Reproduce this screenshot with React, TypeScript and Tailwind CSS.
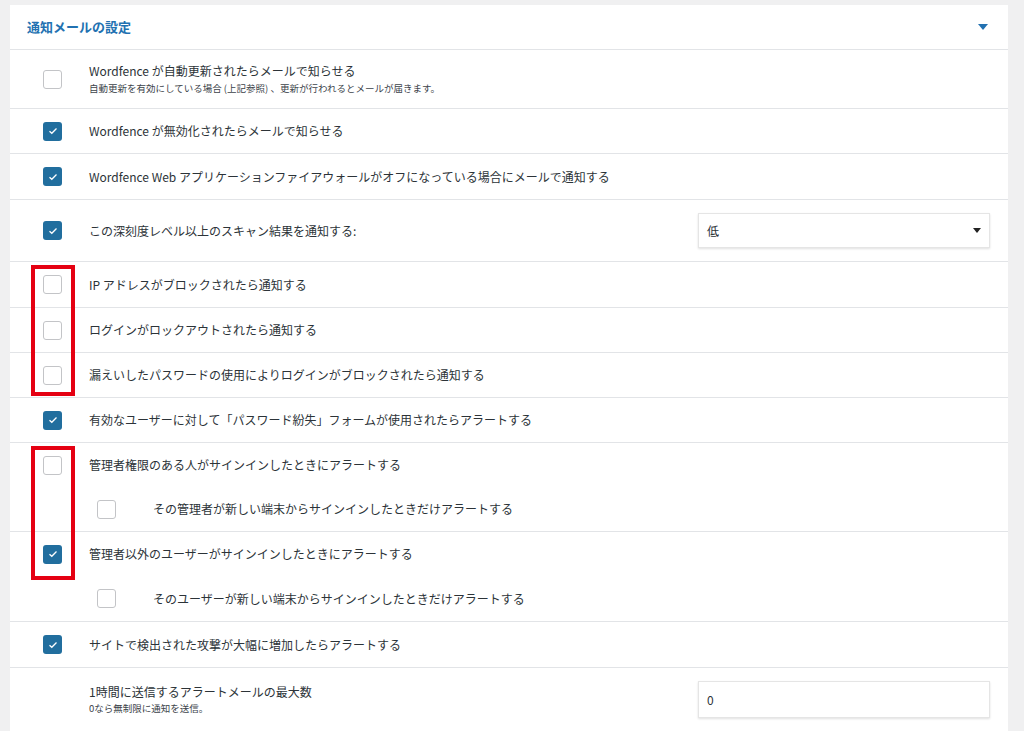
const Box = ({ on }: { on?: boolean }) =>
  on ? (
    <div className="w-[19px] h-[19px] rounded-[3px] bg-[#216e9e] flex items-center justify-center shrink-0">
      <svg width="10" height="8" viewBox="0 0 10 8"><path d="M1.5 4.2 L3.8 6.3 L8.5 1.5" stroke="white" strokeWidth="1.3" fill="none" /></svg>
    </div>
  ) : (
    <div className="w-[19px] h-[19px] rounded-[3px] border border-[#c3c4c7] bg-white shrink-0" />
  );

const Row = ({ on, text, sub, h = 45, border = true, indent = false }: { on?: boolean; text: string; sub?: string; h?: number; border?: boolean; indent?: boolean }) => (
  <div className={`flex items-center ${border ? "border-t border-[#e2e4e7]" : ""}`} style={{ height: h }}>
    <div className={indent ? "pl-[87px] w-[143px]" : "pl-[33px] w-[79px]"}><Box on={on} /></div>
    <div>
      <div className="text-[12px] text-[#2c3338]">{text}</div>
      {sub && <div className="text-[9.5px] text-[#3c434a] mt-[1px]">{sub}</div>}
    </div>
  </div>
);

export default function App() {
  return (
    <div className="w-[1024px] h-[731px] bg-[#f0f0f1] pt-[5px] pl-[10px] overflow-hidden" style={{ fontFamily: '"Noto Sans CJK JP", "Noto Sans", sans-serif' }}>
      <div className="w-[998px] bg-white relative">
        <div className="h-[44px] flex items-center justify-between pl-[17px] pr-[20px]">
          <span className="text-[13px] font-bold text-[#2271b1]">通知メールの設定</span>
          <svg width="10" height="6" viewBox="0 0 10 6"><path d="M0 0 H10 L5 6Z" fill="#2271b1" /></svg>
        </div>
        <Row text="Wordfence が自動更新されたらメールで知らせる" sub="自動更新を有効にしている場合 (上記参照) 、更新が行われるとメールが届きます。" h={59} />
        <Row on text="Wordfence が無効化されたらメールで知らせる" />
        <Row on text="Wordfence Web アプリケーションファイアウォールがオフになっている場合にメールで通知する" h={46} />
        <div className="flex items-center justify-between border-t border-[#e2e4e7] h-[62px] pr-[18px]">
          <div className="flex items-center">
            <div className="pl-[33px] w-[79px]"><Box on /></div>
            <span className="text-[12px] text-[#2c3338]">この深刻度レベル以上のスキャン結果を通知する:</span>
          </div>
          <div className="w-[292px] h-[35px] border border-[#e5e5e5] shadow-[0_1px_2px_rgba(0,0,0,0.12)] flex items-center justify-between px-[8px]">
            <span className="text-[12px] text-[#2c3338]">低</span>
            <svg width="8" height="5" viewBox="0 0 8 5"><path d="M0 0 H8 L4 5Z" fill="#222" /></svg>
          </div>
        </div>
        <Row text="IP アドレスがブロックされたら通知する" h={46} />
        <Row text="ログインがロックアウトされたら通知する" />
        <Row text="漏えいしたパスワードの使用によりログインがブロックされたら通知する" />
        <Row on text="有効なユーザーに対して「パスワード紛失」フォームが使用されたらアラートする" />
        <Row text="管理者権限のある人がサインインしたときにアラートする" />
        <Row indent border={false} text="その管理者が新しい端末からサインインしたときだけアラートする" h={44} />
        <Row on text="管理者以外のユーザーがサインインしたときにアラートする" />
        <Row indent border={false} text="そのユーザーが新しい端末からサインインしたときだけアラートする" h={45} />
        <Row on text="サイトで検出された攻撃が大幅に増加したらアラートする" h={46} />
        <div className="flex items-center justify-between border-t border-[#e2e4e7] h-[64px] pr-[18px]">
          <div className="pl-[79px]">
            <div className="text-[12px] text-[#2c3338]">1時間に送信するアラートメールの最大数</div>
            <div className="text-[9.5px] text-[#3c434a]">0なら無制限に通知を送信。</div>
          </div>
          <div className="w-[292px] h-[37px] border border-[#e5e5e5] shadow-[0_1px_2px_rgba(0,0,0,0.12)] flex items-center px-[8px] text-[12px] text-[#2c3338]">0</div>
        </div>
        <div className="absolute left-[21px] top-[260px] w-[44px] h-[131px] border-[4px] border-[#e50012]" />
        <div className="absolute left-[21px] top-[441px] w-[44px] h-[134px] border-[4px] border-[#e50012]" />
      </div>
    </div>
  );
}
